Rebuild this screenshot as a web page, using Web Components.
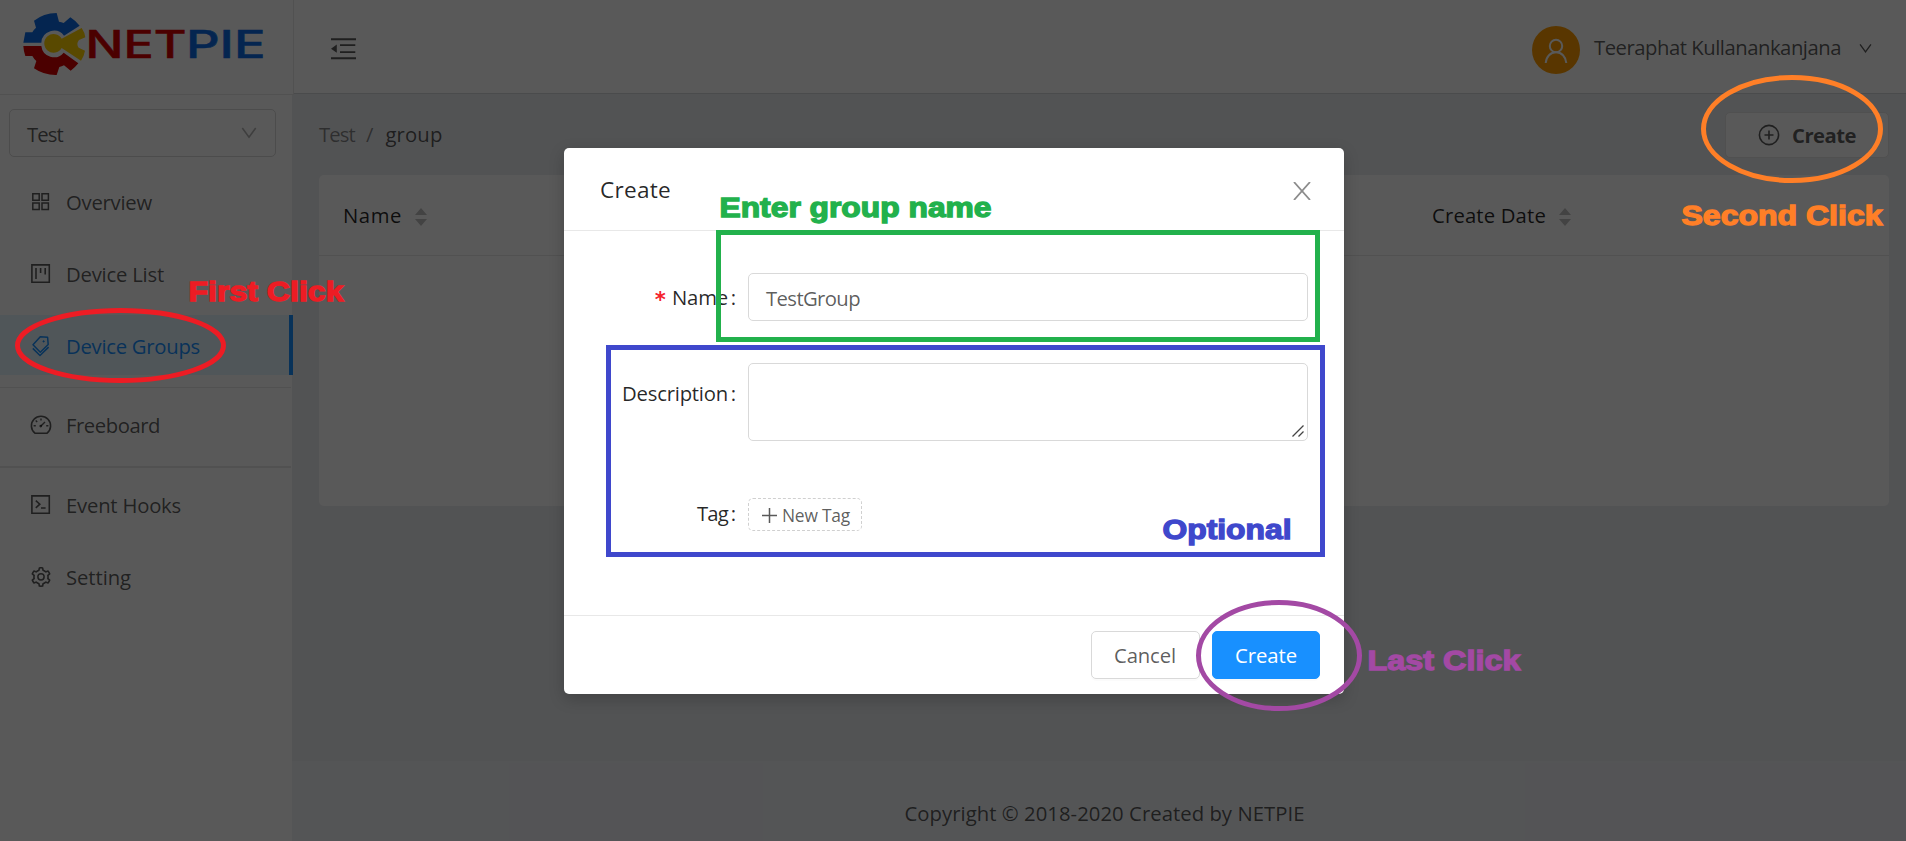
<!DOCTYPE html>
<html lang="en"><head><meta charset="utf-8"><title>NETPIE</title>
<style>
html,body{margin:0;height:100%;overflow:hidden}
body{font-family:"Open Sans","Noto Sans",sans-serif;font-size:20.3px;color:rgba(0,0,0,.65)}
</style></head><body>
<np-app></np-app>
<script>
const def=(name,html,up)=>customElements.define(name,class extends HTMLElement{
  constructor(){super();this.attachShadow({mode:'open'}).innerHTML=html;}
  connectedCallback(){if(up)up.call(this,this.shadowRoot);}
});

/* one line of text, 27px high, tracked to a given width */
def('np-text',`<style>:host{display:block;flex:none;line-height:27px;height:27px;white-space:nowrap}span{display:inline-block}</style><span><slot></slot></span>`,function(r){
  const w=+this.getAttribute('w'),s=r.querySelector('span');
  if(!w)return;
  this.style.width=w+'px';
  const n=this.textContent.length,nat=s.getBoundingClientRect().width;
  s.style.letterSpacing=((w-nat)/n)+'px';
});

const icons={
 grid:`<svg viewBox="0 0 20 20" fill="none" stroke="currentColor" stroke-width="1.5"><path d="M1.8 1.8h6.4v6.4H1.8zM11 1.8h6.4v6.4H11zM1.8 11h6.4v6.4H1.8zM11 11h6.4v6.4H11z"/></svg>`,
 project:`<svg viewBox="0 0 20 20" fill="none" stroke="currentColor" stroke-width="1.6"><path d="M.9.9h17.4v17.4H.9zM5 4v11M9.6 4v5M14.2 4v6.5"/></svg>`,
 tags:`<svg viewBox="0 0 20 22" fill="none" stroke="currentColor" stroke-width="1.5" stroke-linejoin="round"><path d="M9.3 1.8l7.3.5.6 7.2-7.9 7.7L2 9.8z"/><path d="M1.8 13.4l7.2 7.1 8.6-8.4"/><circle cx="12.6" cy="6.4" r=".7" fill="currentColor" stroke-width=".8"/></svg>`,
 dash:`<svg viewBox="0 0 22 20" fill="none" stroke="currentColor" stroke-width="1.6"><path d="M4.9 18.2A9.6 9.6 0 1 1 17.1 18.2z" stroke-linejoin="round"/><path d="M10.7 11.2l4.3-4.3M11 3.4v2.2M3.6 10.7h2.2M16.2 10.7h2.2M5.7 5.5l1.5 1.5" stroke-width="1.4"/><circle cx="10.7" cy="11.1" r="1.3" fill="currentColor" stroke="none"/></svg>`,
 code:`<svg viewBox="0 0 20 20" fill="none" stroke="currentColor" stroke-width="1.6"><path d="M.9.9h17.4v17.4H.9z"/><path d="M4.8 5.6l4 3.6-4 3.6M10 13h4.6"/></svg>`,
 gear:`<svg viewBox="64 64 896 896" fill="currentColor" fill-rule="evenodd"><path d="M924.8 625.7l-65.5-56c3.1-19 4.7-38.4 4.7-57.8s-1.6-38.8-4.7-57.8l65.5-56a32.03 32.03 0 009.3-35.2l-.9-2.6a443.74 443.74 0 00-79.7-137.9l-1.8-2.1a32.12 32.12 0 00-35.1-9.5l-81.3 28.9c-30-24.6-63.5-44-99.7-57.6l-15.7-85a32.05 32.05 0 00-25.8-25.7l-2.7-.5c-52.1-9.4-106.9-9.4-159 0l-2.7.5a32.05 32.05 0 00-25.8 25.7l-15.8 85.4a351.86 351.86 0 00-99 57.4l-81.9-29.1a32 32 0 00-35.1 9.5l-1.8 2.1a446.02 446.02 0 00-79.7 137.9l-.9 2.6c-4.5 12.5-.8 26.5 9.3 35.2l66.3 56.6c-3.1 18.8-4.6 38-4.6 57.1 0 19.2 1.5 38.4 4.6 57.1L99 625.5a32.03 32.03 0 00-9.3 35.2l.9 2.6c18.1 50.4 44.9 96.9 79.7 137.9l1.8 2.1a32.12 32.12 0 0035.1 9.5l81.9-29.1c29.8 24.5 63.1 43.9 99 57.4l15.8 85.4a32.05 32.05 0 0025.8 25.7l2.7.5a449.4 449.4 0 00159 0l2.7-.5a32.05 32.05 0 0025.8-25.7l15.7-85a350 350 0 0099.7-57.6l81.3 28.9a32 32 0 0035.1-9.5l1.8-2.1c34.8-41.1 61.6-87.5 79.7-137.9l.9-2.6c4.5-12.3.8-26.3-9.3-35zM788.3 465.9c2.5 15.1 3.8 30.6 3.8 46.1s-1.3 31-3.8 46.1l-6.6 40.1 74.7 63.9a370.03 370.03 0 01-42.6 73.6L721 702.8l-31.4 25.8c-23.9 19.6-50.5 35-79.3 45.8l-38.1 14.3-17.9 97a377.5 377.5 0 01-85 0l-17.9-97.2-37.8-14.5c-28.5-10.8-55-26.2-78.7-45.7l-31.4-25.9-93.4 33.2c-17-22.9-31.2-47.6-42.6-73.6l75.5-64.5-6.5-40c-2.4-14.9-3.7-30.3-3.7-45.5 0-15.3 1.2-30.6 3.7-45.5l6.5-40-75.5-64.5c11.3-26.1 25.6-50.7 42.6-73.6l93.4 33.2 31.4-25.9c23.7-19.5 50.2-34.9 78.7-45.7l37.9-14.3 17.9-97.2c28.1-3.2 56.8-3.2 85 0l17.9 97 38.1 14.3c28.7 10.8 55.4 26.2 79.3 45.8l31.4 25.8 92.8-32.9c17 22.9 31.2 47.6 42.6 73.6L781.8 426l6.5 39.9z"/><circle cx="512" cy="502" r="140" fill="none" stroke="currentColor" stroke-width="68"/></svg>`,
 down:`<svg viewBox="0 0 16 12" fill="none" stroke="currentColor" stroke-width="1.6"><path d="M1.3 1l6.7 9.2L14.7 1"/></svg>`,
 fold:`<svg viewBox="0 0 25 22" fill="currentColor"><path d="M0 .3h25v1.9H0zM9 6.3h15.3v1.8H9zM9 13.3h15.3v1.8H9zM0 19.3h25v1.9H0zM0 10.7L5.8 6.6v8.2z"/></svg>`,
 user:`<svg viewBox="0 0 24 26" fill="none" stroke="currentColor" stroke-width="2"><circle cx="12" cy="8" r="6.2"/><path d="M1.7 25C2.2 18.5 6.5 14.3 12 14.3S21.8 18.5 22.3 25"/></svg>`,
 plusc:`<svg viewBox="0 0 22 22" fill="none" stroke="currentColor" stroke-width="1.6"><circle cx="11" cy="11" r="9.6"/><path d="M11 6.5v9M6.5 11h9"/></svg>`,
 plus:`<svg viewBox="0 0 15 15" fill="none" stroke="currentColor" stroke-width="1.5"><path d="M7.5 0v15M0 7.5h15"/></svg>`,
 close:`<svg viewBox="0 0 18 18" fill="none" stroke="currentColor" stroke-width="1.8"><path d="M1 0l16 18M17 0L1 18"/></svg>`,
 sort:`<svg viewBox="0 0 12 18" fill="currentColor"><path d="M6 0l6 7H0zM6 18l6-7H0z"/></svg>`,
 grip:`<svg viewBox="0 0 12 12" fill="none" stroke="#444" stroke-width="1.3"><path d="M.5 11.5l11-11M6.5 11.5l5-5"/></svg>`
};
def('np-icon',`<style>:host{display:block;flex:none}svg{display:block;width:100%;height:100%}</style><div></div>`,function(r){
  r.querySelector('div').innerHTML=icons[this.getAttribute('name')]||'';
  const d=r.querySelector('div').style;d.width=this.getAttribute('w')+'px';d.height=this.getAttribute('h')+'px';
});

def('np-logo',`<style>:host{display:block}svg{display:block}text{font-family:Inter,sans-serif;font-weight:500;font-size:37.5px}</style>
<svg width="292" height="94">
<g transform="scale(.33333)">
<path fill="#0d6be6" d="M70 128L76 97h21q4-8 11-14L102 62Q130 40 170 39l7 26q7 1 14 4l20-17q17 11 28 25l-47 30a38 38 0 0 0-68 21z"/>
<path fill="#d80000" d="M70 138h54a38 38 0 0 0 67 20l44 32q-10 13-23 22l-20-16q-7 4-14 5l-8 24q-38 1-68-20l7-22q-7-6-12-15H76q-5-13-6-30z"/>
<path fill="#ffd000" d="M245 84q9 13 11 28l-19 8q-5 6-5 12t4 11l19 9q-3 17-12 30l-58-38a28 28 0 1 1 0-28z"/>
</g>
<text x="85.5" y="58" fill="#d80000" stroke="#d80000" stroke-width=".5" textLength="101" lengthAdjust="spacingAndGlyphs">NET</text>
<text x="186" y="58" fill="#0d6be6" stroke="#0d6be6" stroke-width=".5" textLength="79.5" lengthAdjust="spacingAndGlyphs">PIE</text>
</svg>`);

def('np-item',`<style>:host{display:flex;height:60px;box-sizing:border-box;padding:0 0 0 31px;margin-bottom:12px}
:host([on]){background:#e6f7ff;color:#1890ff;border-right:4px solid #1890ff;width:293px}
.i{width:35px;padding-top:21px}.t{padding-top:18px}</style><div class="i"><np-icon></np-icon></div><div class="t"><np-text><slot></slot></np-text></div>`,function(r){
  const i=r.querySelector('np-icon'),t=r.querySelector('np-text');
  i.setAttribute('name',this.getAttribute('icon'));i.setAttribute('w',this.getAttribute('iw')||20);i.setAttribute('h',this.getAttribute('ih')||20);
  if(this.getAttribute('icon')=='dash')i.style.marginLeft='-1px';
  if(+this.getAttribute('ih')==22)i.style.marginTop='-1px';
  i.connectedCallback();
  t.innerHTML=this.textContent;t.setAttribute('w',this.getAttribute('w'));t.connectedCallback();
});

def('np-sider',`<style>:host{display:block;width:292px;flex:none;background:#fff;position:relative}
.logo{height:95px;border-bottom:1px solid #e8e8e8;width:294px;border-right:1px solid #e8e8e8;box-sizing:border-box;background:#fff}
.sel{margin:14px 0 14px 9px;width:267px;height:48px;box-sizing:border-box;border:1px solid #d9d9d9;border-radius:5px;display:flex;justify-content:space-between;padding:11px 18px 0 17px}
.sel np-icon{color:rgba(0,0,0,.3);margin-top:6px}
hr{border:0;margin:0 1px 6px 0;height:1px;background:#e8e8e8}hr.b{height:2px}</style>
<div class="logo"><np-logo></np-logo></div>
<div class="sel"><np-text w="36">Test</np-text><np-icon name="down" w="16" h="12"></np-icon></div>
<np-item icon="grid" w="86">Overview</np-item><np-item icon="project" w="98">Device List</np-item>
<np-item icon="tags" ih="22" w="134" on>Device Groups</np-item><hr>
<np-item icon="dash" iw="22" w="94">Freeboard</np-item><hr class="b">
<np-item icon="code" w="115">Event Hooks</np-item><np-item icon="gear" iw="20" ih="22" w="65">Setting</np-item>`);

def('np-header',`<style>:host{display:flex;height:94px;box-sizing:border-box;border-bottom:1px solid #d5d7da;background:#fff;padding:0 34px 0 39px;align-items:flex-start}
.fold{margin-top:38px;margin-right:auto}.av{width:48px;height:48px;border-radius:50%;background:#ff9c00;margin:26px 14px 0 0;color:#fff;display:flex;justify-content:center}
.av np-icon{margin:12px 1px 0 0}np-text{margin-top:34px}.d{margin:43px 0 0 18px}</style>
<np-icon class="fold" name="fold" w="25" h="22"></np-icon><div class="av"><np-icon name="user" w="24" h="26"></np-icon></div><np-text w="247">Teeraphat Kullanankanjana</np-text><np-icon class="d" name="down" w="13" h="11"></np-icon>`);

def('np-content',`<style>:host{display:block;flex:1;padding:18px 17px 0 27px;background:#ecedf0}
.top{display:flex;height:46px;margin-bottom:17px}.top>np-text{margin-top:9px}
.c1{color:rgba(0,0,0,.45)}.sl{margin:0 12px 0 11px;color:rgba(0,0,0,.45)}
.btn{margin-left:auto;width:164px;height:46px;box-sizing:border-box;border:1px solid #e4e4e4;border-radius:5px;background:#fff;display:flex;padding:0 0 0 32px}
.btn np-icon{margin-top:11px}.btn np-text{font-weight:700;margin:9px 0 0 12px}
.card{height:331px;background:#fff;border-radius:5px}
.row{display:flex;height:80px;border-bottom:1px solid #e8e8e8;padding-left:24px;color:rgba(0,0,0,.85);font-weight:500}
.row np-text{margin-top:27px}.row np-icon{color:#bfbfbf;margin:33px 0 0 13px}.cell{display:flex;width:1089px}</style>
<div class="top"><np-text class="c1" w="36">Test</np-text><np-text class="c1 sl">/</np-text><np-text w="57">group</np-text>
<div class="btn"><np-icon name="plusc" w="22" h="22"></np-icon><np-text w="64">Create</np-text></div></div>
<div class="card"><div class="row"><div class="cell"><np-text w="59">Name</np-text><np-icon name="sort" w="12" h="18"></np-icon></div><div class="cell" style="width:auto"><np-text w="114">Create Date</np-text><np-icon name="sort" w="12" h="18"></np-icon></div></div></div>`);

def('np-footer',`<style>:host{display:flex;height:80px;box-sizing:border-box;padding:39px 0 0 11px;justify-content:center;background:#f0f2f5}</style><np-text w="400">Copyright © 2018-2020 Created by NETPIE</np-text>`);

def('np-field',`<style>:host{display:flex}.l{display:flex;justify-content:flex-end;width:172px;margin-right:12px;color:rgba(0,0,0,.85);flex:none}
.l>*{margin-top:var(--lt)}.c{width:8px;text-align:right}.req{color:#f5222d;width:18px;font-family:"DejaVu Sans Mono",monospace;font-size:21px;font-weight:700;padding-top:3px}</style>
<div class="l"><np-text class="req"></np-text><np-text class="n"></np-text><np-text class="c">:</np-text></div><slot></slot>`,function(r){
  const n=r.querySelector('.n');n.textContent=this.getAttribute('label');n.setAttribute('w',this.getAttribute('w'));n.connectedCallback();
  if(this.hasAttribute('required'))r.querySelector('.req').textContent='*';else r.querySelector('.req').remove();
});

def('np-modal',`<style>:host{position:absolute;left:564px;top:148px;width:780px;height:546px;background:#fff;border-radius:5px;box-shadow:0 5px 16px rgba(0,0,0,.2);display:flex;flex-direction:column}
.h{height:82px;border-bottom:1px solid #e8e8e8;box-sizing:content-box;display:flex;justify-content:space-between;padding:0 33px 0 36px;flex:none}
.h np-text{color:rgba(0,0,0,.85);font-weight:500;margin-top:28px;font-size:22.6px}.h np-icon{color:#8c8c8c;margin-top:34px}
.b{flex:1;padding-top:42px}
.in{width:560px;height:48px;box-sizing:border-box;border:1px solid #d9d9d9;border-radius:5px;padding:11px 17px}
.ta{height:78px;display:flex;justify-content:flex-end;align-items:flex-end;padding:0 3px 3px}
.tag{width:114px;height:33px;box-sizing:border-box;border:1px dashed #d0d0d0;border-radius:5px;display:flex;padding:3px 0 0 12px;font-size:17.4px}
.tag np-icon{margin:6px 5px 0 1px}
.f{height:79px;border-top:1px solid #e8e8e8;display:flex;justify-content:flex-end;padding:15px 24px 0 0;gap:12px;box-sizing:border-box;flex:none}
.bt{width:109px;height:48px;box-sizing:border-box;border:1px solid #d9d9d9;border-radius:5px;padding:10px 0 0 22px;box-shadow:0 2px 0 rgba(0,0,0,.015)}
.p{width:108px;background:#1890ff;border-color:#1890ff;color:#fff}</style>
<div class="h"><np-text w="71">Create</np-text><np-icon name="close" w="18" h="18"></np-icon></div>
<div class="b">
<np-field label="Name" w="56" required style="--lt:11px"><div class="in"><np-text w="94">TestGroup</np-text></div></np-field>
<np-field label="Description" w="106" style="margin-top:42px;--lt:17px"><div class="in ta"><np-icon name="grip" w="12" h="12"></np-icon></div></np-field>
<np-field label="Tag" w="31" style="margin-top:57px;--lt:2px"><div class="tag"><np-icon name="plus" w="15" h="15"></np-icon><np-text w="68">New Tag</np-text></div></np-field>
</div>
<div class="f"><div class="bt"><np-text w="62">Cancel</np-text></div><div class="bt p"><np-text w="62">Create</np-text></div></div>`);

/* hand-drawn marks placed freely over the page */
def('np-marks',`<style>:host{position:absolute;inset:0;pointer-events:none}svg{display:block}text{font:bold 27px "Liberation Sans",Arial,sans-serif;stroke-width:1.3}</style>
<svg width="1906" height="841" fill="none" stroke-width="5">
<rect x="718.5" y="232.5" width="599" height="107" stroke="#22b14c"/>
<rect x="608.5" y="347.5" width="714" height="207" stroke="#3f48cc"/>
<ellipse cx="120.5" cy="345.5" rx="103" ry="35" stroke="#ed1c24"/>
<ellipse cx="1792" cy="129" rx="88.5" ry="51.5" stroke="#ff7f27"/>
<ellipse cx="1279" cy="655.5" rx="80.5" ry="53" stroke="#a349a4"/>
<g>
<text x="188.5" y="301" textLength="155" lengthAdjust="spacingAndGlyphs" fill="#ed1c24" stroke="#ed1c24">First Click</text>
<text x="1681.5" y="225" textLength="201" lengthAdjust="spacingAndGlyphs" fill="#ff7f27" stroke="#ff7f27">Second Click</text>
<text x="719.5" y="217" textLength="272" lengthAdjust="spacingAndGlyphs" fill="#22b14c" stroke="#22b14c">Enter group name</text>
<text x="1162.5" y="539" textLength="129" lengthAdjust="spacingAndGlyphs" fill="#3f48cc" stroke="#3f48cc">Optional</text>
<text x="1367.5" y="670" textLength="153" lengthAdjust="spacingAndGlyphs" fill="#a349a4" stroke="#a349a4">Last Click</text>
</g></svg>`);

def('np-app',`<style>:host{display:flex;position:relative;width:1906px;height:841px;overflow:hidden;background:#ecedf0}
.m{flex:1;display:flex;flex-direction:column}.mask{position:absolute;inset:0;background:rgba(0,0,0,.65)}</style>
<np-sider></np-sider><div class="m"><np-header></np-header><np-content></np-content><np-footer></np-footer></div>
<div class="mask"></div><np-modal></np-modal><np-marks></np-marks>`);
</script></body></html>
